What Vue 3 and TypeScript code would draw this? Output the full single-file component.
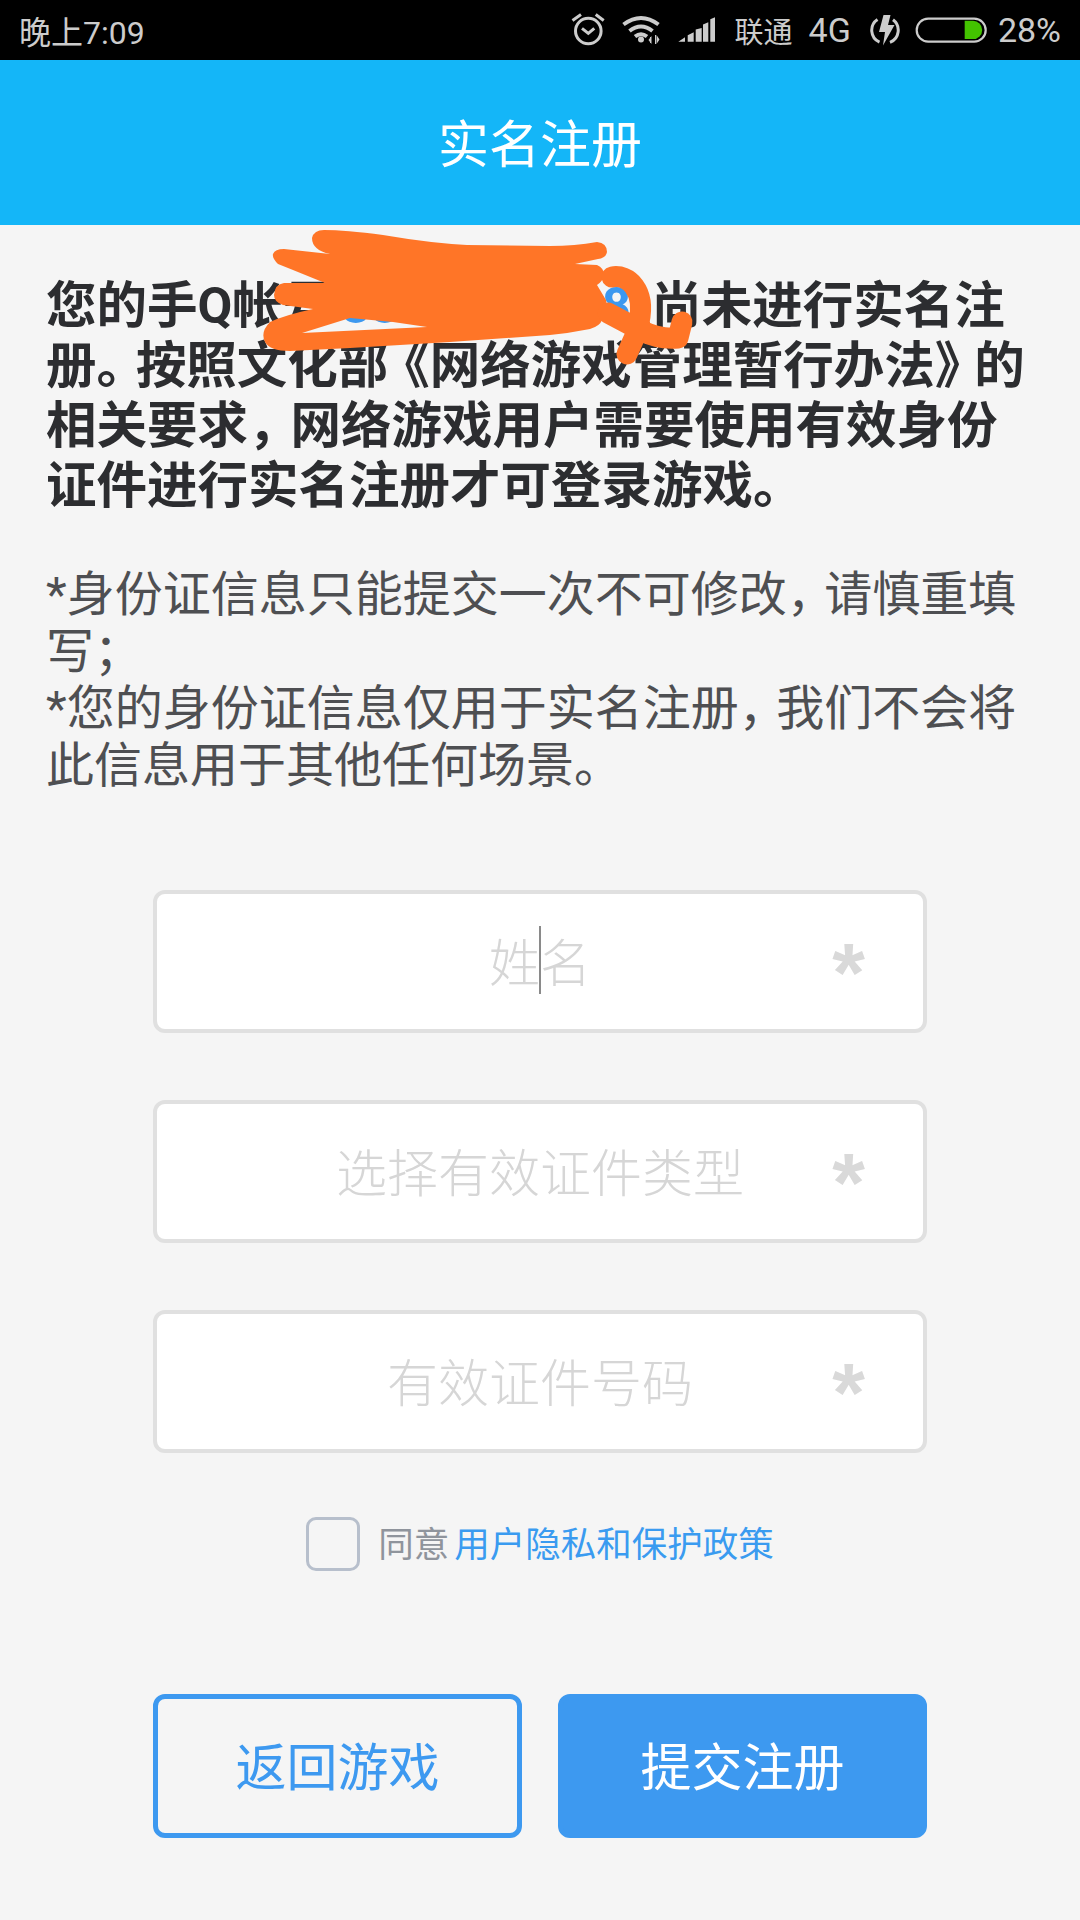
<script setup lang="ts">
interface Field {
  label: string
  // the name field shows the text caret between its two characters
  caretAt?: number
}

const fields: Field[] = [
  { label: '姓名', caretAt: 1 },
  { label: '选择有效证件类型' },
  { label: '有效证件号码' }
]
</script>

<template>
  <div class="page">
    <div class="status-bar">
      <span class="time">晚上7:09</span>
      <div class="status-right">
        <svg class="ic-alarm" width="34" height="34" viewBox="571 13 34 34">
          <circle cx="588.3" cy="31" r="12.8" fill="none" stroke="#ccc" stroke-width="3" />
          <path d="M572.5 20.5 581 14.5M595.7 14.5l8 6M582 28.3l6.3 5 6-5" fill="none" stroke="#ccc" stroke-width="3" />
        </svg>
        <svg class="ic-wifi" width="40" height="30" viewBox="621 15 40 30">
          <path d="M623.5 24.5q17.500-13 35 0M629.500 31q11.500-9 23 0M635 36.500q6-4.500 12 0" fill="none" stroke="#ccc" stroke-width="4" />
          <circle cx="641" cy="39.500" r="3" fill="#ccc" />
          <path d="M651.500 36v8l-3-4zM656.500 44v-9l3 4.500z" fill="#ccc" />
          <path d="M650.500 37v6M655.500 35v9" stroke="#ccc" stroke-width="1" />
        </svg>
        <svg class="ic-signal" width="38" height="26" viewBox="678 18 38 26">
          <path d="M678.300 42.700 685 38.300v4.400zM687.700 36.300l6-3v9.400h-6zM695.700 30.500l6-1.500v13.700h-6zM703 25.500l5.300-2.200v19.400H703zM710.300 20.300l4.700-2v24.400h-4.700z" fill="#ccc" />
        </svg>
        <span class="carrier">联通</span>
        <span class="net">4G</span>
        <svg class="ic-charge" width="32" height="32" viewBox="872 14 32 32">
          <path d="M879.500 19.500a13 13 0 0 0 2 22.700M895 19.800a13 13 0 0 1-3 22.500" fill="none" stroke="#ccc" stroke-width="3" />
          <path d="M885.500 15h7l-2.500 10h6.500l-11.500 20.500 2-13.500h-6z" fill="#ccc" />
        </svg>
        <svg class="ic-battery" width="72" height="26" viewBox="917 17 72 26">
          <rect x="918.700" y="18.700" width="69" height="23" rx="11.500" fill="none" stroke="#ccc" stroke-width="2.200" />
          <path d="M966.700 20.700h8.300a9.200 9.200 0 0 1 0 18.400h-8.300z" fill="#43c300" />
        </svg>
        <span class="percent">28%</span>
      </div>
    </div>

    <header class="top-bar">实名注册</header>

    <main class="content">
      <p class="intro">
        您的手Q帐号<span class="account">8888888888</span>尚未进行实名注<br />册<span class="tight">。</span>按照文化部<span class="tight-left">《</span>网络游戏管理暂行办法<span class="tight">》</span>的<br />相关要求<span class="tight wide">，</span>网络游戏用户需要使用有效身份<br />证件进行实名注册才可登录游戏。
      </p>
      <p class="notice">
        *身份证信息只能提交一次不可修改<span class="tight">，</span>请慎重填<br />写；<br />*您的身份证信息仅用于实名注册<span class="tight">，</span>我们不会将<br />此信息用于其他任何场景。
      </p>

      <div class="form">
        <div v-for="field in fields" :key="field.label" class="field">
          <span class="field-label">
            <template v-if="field.caretAt">
              {{ field.label.slice(0, field.caretAt) }}<i class="caret"></i>{{ field.label.slice(field.caretAt) }}
            </template>
            <template v-else>{{ field.label }}</template>
          </span>
          <span class="required">*</span>
        </div>

        <label class="agree">
          <span class="checkbox"></span>
          <span class="agree-text">同意</span>
          <a class="agree-link">用户隐私和保护政策</a>
        </label>

        <div class="actions">
          <button class="btn btn-back">返回游戏</button>
          <button class="btn btn-submit">提交注册</button>
        </div>
      </div>
    </main>

    <!-- hand drawn redaction over the account number -->
    <svg class="scribble" width="1080" height="400" viewBox="0 0 1080 400">
      <path
        fill="#ff7527"
        fill-rule="evenodd"
        d="M312 238Q314 230 324 230Q345 230 383 235Q430 243 467 245L550 246Q575 246 597 242Q607 243 607 252Q606 258 598 259L575 264L597 265Q604 268 604 275Q603 281 597 285L606 300L608 312L602 320Q600 326 590 329Q570 333 550 335L450 342Q400 345 350 348L290 351Q270 351 265 342Q260 332 270 322Q285 315 313 309L283 305Q274 302 274 295Q275 284 284 283L325 283L293 270L278 264Q272 258 273 254Q275 249 284 249L330 254Q312 250 312 238ZM302 333L427 327L393 322L350 318Z"
      />
      <path
        d="M612 277C628 274 646 290 639 322M608 313L640 330Q660 340 678 338L682 322M640 325L627 354"
        fill="none"
        stroke="#ff7527"
        stroke-width="21"
        stroke-linecap="round"
        stroke-linejoin="round"
      />
    </svg>
  </div>
</template>

<style>
body {
  background: #f5f5f5;
}
</style>

<style scoped>
.page {
  position: relative;
  width: 1080px;
  height: 1920px;
  overflow: hidden;
  background: #f5f5f5;
  font-family: Roboto, "Noto Sans CJK SC", sans-serif;
}

.status-bar {
  height: 60px;
  background: #000;
  color: #ccc;
  display: flex;
  align-items: center;
  justify-content: space-between;
  padding: 0 19px;
  box-sizing: border-box;
  font-size: 34px;
}

.time {
  font-size: 32px;
}

.status-right {
  display: flex;
  align-items: center;
}

.status-right svg {
  display: block;
  flex: none;
}

.ic-wifi {
  margin-left: 16px;
}

.ic-signal {
  margin-left: 17px;
}

.carrier {
  margin-left: 19px;
  font-size: 29px;
}

.net {
  margin-left: 16px;
}

.ic-charge {
  margin-left: 19px;
}

.ic-battery {
  margin-left: 13px;
}

.percent {
  margin-left: 11px;
}

.top-bar {
  height: 165px;
  box-sizing: border-box;
  padding-bottom: 4px;
  background: #14b6f8;
  color: #fff;
  font-size: 51px;
  display: flex;
  align-items: center;
  justify-content: center;
}

.content {
  padding: 51px 46px 0;
}

.intro {
  margin: 0;
  font-size: 50.5px;
  line-height: 60px;
  font-weight: 700;
  color: #2c2d30;
  white-space: nowrap;
}

.account {
  display: inline-block;
  width: 318px;
  box-sizing: border-box;
  padding-left: 8px;
  color: #3c98ef;
}

/* punctuation in the reference is narrower than a full em */
.tight {
  font-feature-settings: "halt";
  margin-right: 0.28em;
}

.tight.wide {
  margin-right: 0.34em;
}

.tight-left {
  font-feature-settings: "halt";
  margin-left: 0.32em;
}

.notice {
  margin: 50px 0 0;
  font-size: 48px;
  line-height: 57px;
  color: #4e4f52;
  white-space: nowrap;
}

.form {
  margin: 96px 107px 0;
}

.field {
  height: 143px;
  box-sizing: border-box;
  border: 4px solid #e0e0e0;
  border-radius: 12px;
  background: #fff;
  display: grid;
  grid-template-columns: 1fr auto 1fr;
  align-items: center;
  margin-bottom: 67px;
}

.field:nth-child(3) {
  margin-bottom: 0;
}

.field-label {
  grid-column: 2;
  padding-bottom: 4px;
  font-size: 51px;
  font-weight: 300;
  color: #d6d6d6;
  white-space: nowrap;
}

.caret {
  position: relative;
  display: inline-block;
  width: 0;
}

.caret::after {
  content: '';
  position: absolute;
  left: -1px;
  bottom: -12px;
  width: 2px;
  height: 68px;
  background: #8a8a8a;
}

.required {
  grid-column: 3;
  justify-self: end;
  margin-right: 58px;
  padding-top: 22px;
  font-family: "Liberation Sans", sans-serif;
  font-size: 84px;
  font-weight: 700;
  line-height: 84px;
  color: #d9d9d9;
}

.agree {
  margin-top: 63px;
  display: flex;
  align-items: center;
  justify-content: center;
  font-size: 35.5px;
}

.checkbox {
  width: 54px;
  height: 54px;
  box-sizing: border-box;
  border: 3px solid #b7bfcc;
  border-radius: 10px;
  margin-right: 18px;
}

.agree-text {
  color: #8f949c;
  margin-right: 5px;
  padding-bottom: 4px;
}

.agree-link {
  color: #3a9bf0;
  padding-bottom: 4px;
}

.actions {
  margin-top: 123px;
  display: flex;
  gap: 36px;
}

.btn {
  flex: 1;
  height: 144px;
  box-sizing: border-box;
  border-radius: 12px;
  border: 5px solid #3d99f0;
  font-family: inherit;
  font-size: 51px;
  padding: 0 0 5px;
}

.btn-back {
  background: transparent;
  color: #3d99f0;
}

.btn-submit {
  background: #3d99f0;
  color: #fff;
}

.scribble {
  position: absolute;
  top: 0;
  left: 0;
  pointer-events: none;
}
</style>
